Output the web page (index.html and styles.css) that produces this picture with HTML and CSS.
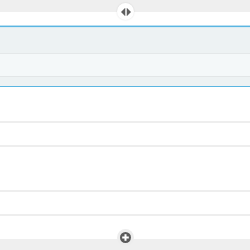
FILE: index.html
```html
<!DOCTYPE html>
<html lang="en">
<head>
    <meta charset="UTF-8">
    <title>Rows</title>
    <link rel="stylesheet" href="styles.css">
</head>
<body>
    <div class="page">
        <div class="bar-top"></div>
        <div class="gap-top"></div>
        <div class="panel">
            <div class="panel-line glow"></div>
            <div class="panel-line"></div>
            <div class="panel-head"></div>
            <div class="panel-row"></div>
            <div class="panel-foot"></div>
            <div class="panel-line"></div>
        </div>
        <div class="row tall"></div>
        <div class="row"></div>
        <div class="row taller"></div>
        <div class="row"></div>
        <div class="row last"></div>
        <div class="bar-bottom"></div>

        <!-- resize handle -->
        <div class="handle handle-resize">
            <svg width="10" height="8" viewBox="0 0 10 8">
                <path d="M4 0 L0 4 L4 8 Z" fill="#5f5f5f"/>
                <path d="M6 0 L10 4 L6 8 Z" fill="#5f5f5f"/>
                <rect x="4.6" y="0" width="0.8" height="8" fill="#9a9a9a"/>
            </svg>
        </div>

        <!-- add handle -->
        <div class="handle handle-add">
            <svg width="11" height="11" viewBox="0 0 11 11">
                <circle cx="5.5" cy="5.5" r="5.5" fill="#5a5a5a"/>
                <rect x="4.5" y="2.2" width="2" height="6.6" fill="#fff"/>
                <rect x="2.2" y="4.5" width="6.6" height="2" fill="#fff"/>
            </svg>
        </div>
    </div>
</body>
</html>
```

FILE: styles.css
```css
html, body {
    margin: 0;
    padding: 0;
    background-color: #ffffff;
    font-family: "Liberation Sans", Arial, sans-serif;
}
.page {
    position: relative;
    width: 250px;
    height: 250px;
    display: flex;
    flex-direction: column;
    overflow: hidden;
}
.bar-top {
    height: 12px;
    background-color: #efefef;
}
.gap-top {
    height: 13px;
    background-color: #ffffff;
}
.panel {
    display: flex;
    flex-direction: column;
    background-color: #edf2f3;
}
.panel-line {
    height: 1px;
    background-color: #5ab6e2;
}
.panel-line.glow {
    background-color: #b9dff1;
}
.panel-head {
    height: 26px;
    border-top: 1px solid #dcecf3;
    box-sizing: border-box;
}
.panel-row {
    height: 22px;
    background-color: #f4f8f9;
    border-top: 1px solid #e4e8e9;
    border-bottom: 1px solid #e2e6e7;
}
.panel-foot {
    height: 9px;
}
.row {
    height: 22px;
    border-bottom: 2px solid #eeeeee;
}
.row.tall {
    height: 34px;
}
.row.taller {
    height: 43px;
}
.row.last {
    height: 23px;
    border-bottom: none;
}
.bar-bottom {
    flex: 1;
    background-color: #efefef;
}
.handle {
    position: absolute;
    left: 117px;
    width: 17px;
    height: 17px;
    border-radius: 50%;
    display: flex;
    align-items: center;
    justify-content: center;
}
.handle-resize {
    top: 3px;
    background-color: #ffffff;
    box-shadow: 0 0 2px rgba(0, 0, 0, 0.12);
}
.handle-add {
    top: 229px;
    background-color: #ededed;
}
```
